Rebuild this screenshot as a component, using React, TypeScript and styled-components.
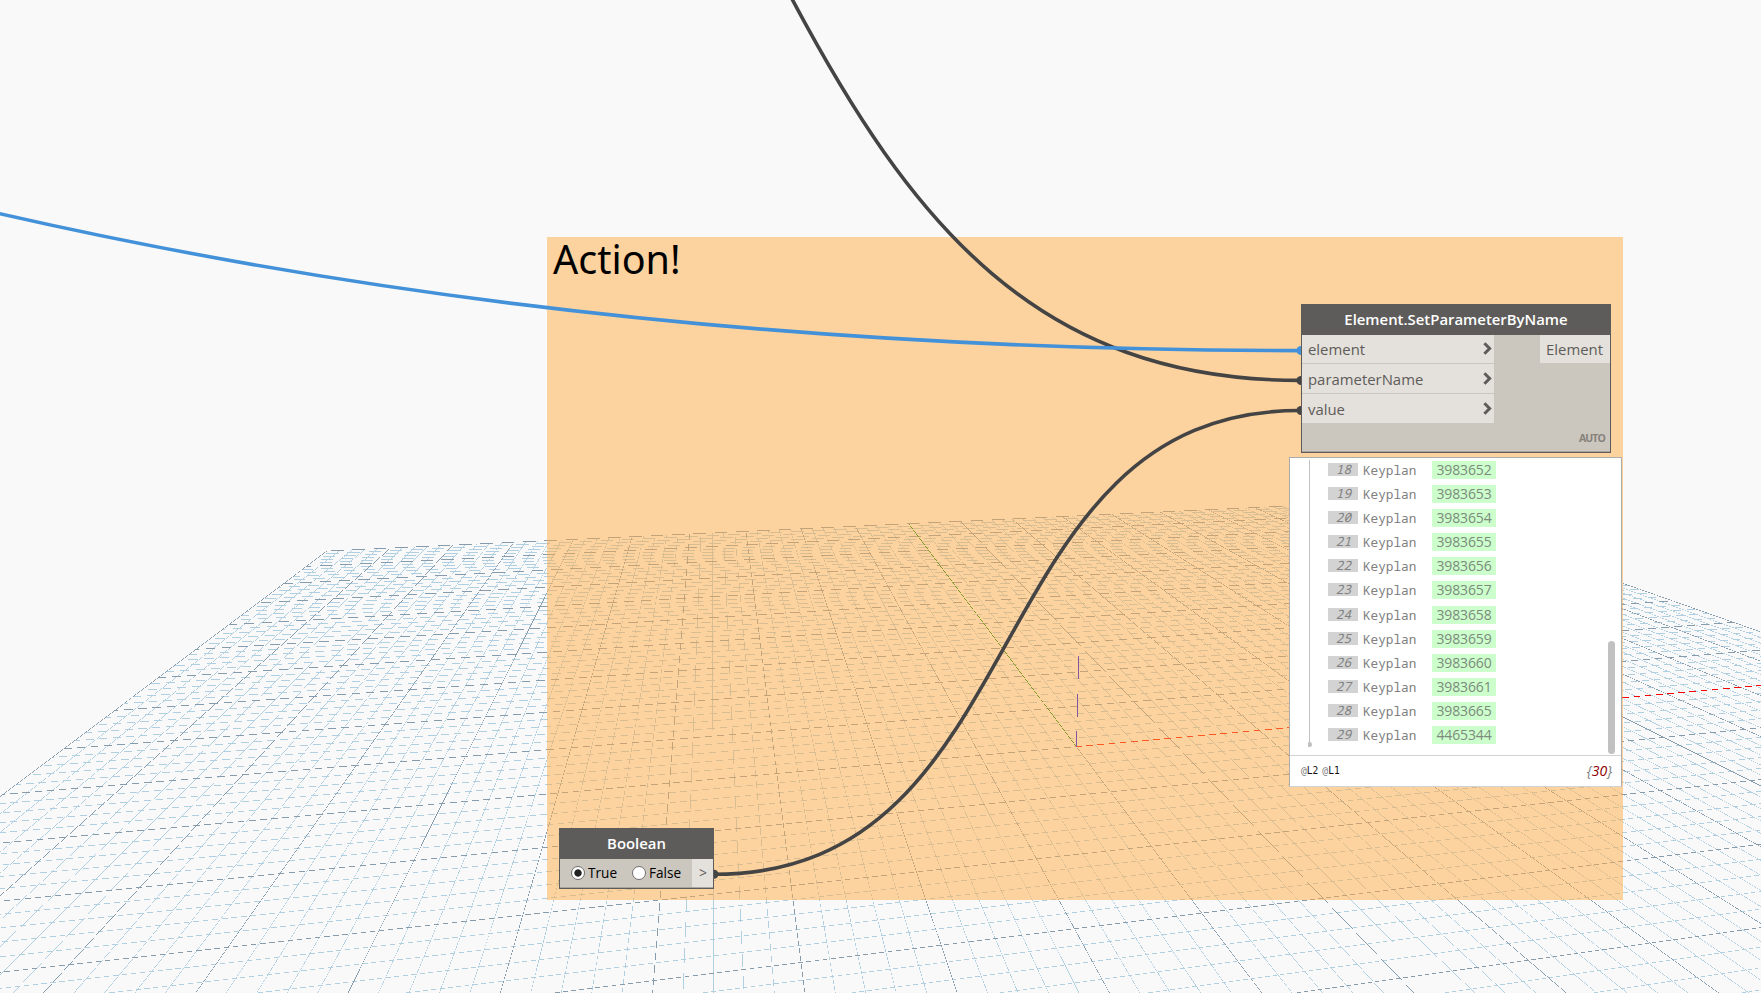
import React from "react";
import styled, { createGlobalStyle } from "styled-components";

const GlobalStyle = createGlobalStyle`
  * { box-sizing: border-box; }
  html, body { margin: 0; padding: 0; overflow: hidden; background: #f9f9f9; }
`;

const WIDTH = 1761;
const HEIGHT = 993;

const Workspace = styled.main`
  position: relative;
  width: ${WIDTH}px;
  height: ${HEIGHT}px;
  overflow: hidden;
  background: #f9f9f9;
  font-family: "Open Sans", "Noto Sans", sans-serif;
`;

const Layer = styled.svg`
  position: absolute;
  inset: 0;
  display: block;
`;

const Group = styled.section`
  position: absolute;
  left: 547px;
  top: 237px;
  width: 1076px;
  height: 663px;
  padding: 0 6px;
  background: rgba(255, 171, 69, 0.5);
`;

const GroupTitle = styled.h1`
  margin: 0;
  font-family: "Noto Sans", "Open Sans", sans-serif;
  font-size: 39.5px;
  font-weight: 400;
  line-height: 44px;
  color: #000;
`;

const NodeCard = styled.article<{ $x: number; $y: number; $w: number; $h: number }>`
  position: absolute;
  left: ${(p) => p.$x}px;
  top: ${(p) => p.$y}px;
  width: ${(p) => p.$w}px;
  height: ${(p) => p.$h}px;
  display: flex;
  flex-direction: column;
  border: 1px solid #5e5c5a;
  background: #cbc6be;
  box-shadow: inset 0 -1px 0 #aaa69f;
`;

const NodeHeader = styled.header`
  flex: none;
  height: 30px;
  line-height: 28px;
  text-align: center;
  background: #5e5c5a;
  color: #fff;
  font-size: 14.9px;
  font-weight: 600;
`;

const NodeBody = styled.div`
  display: flex;
  flex: 1;
  justify-content: space-between;
  align-items: flex-start;
`;

const Inputs = styled.div`
  display: flex;
  flex-direction: column;
  gap: 1px;
  width: 192px;
`;

const InputPort = styled.div<{ $h: number }>`
  display: flex;
  align-items: center;
  justify-content: space-between;
  height: ${(p) => p.$h}px;
  padding: 0 2px 0 6px;
  background: #e4e0db;
  color: #5e5c5a;
  font-size: 14.9px;
  line-height: 28px;
`;

const OutputPort = styled.div`
  width: 70px;
  height: 28px;
  padding-left: 6px;
  background: #e4e0db;
  color: #5e5c5a;
  font-size: 14.9px;
  line-height: 28px;
`;

const Lacing = styled.footer`
  padding: 0 5px 7px 0;
  text-align: right;
  color: #86817b;
  font-size: 10.5px;
  font-weight: 700;
  line-height: 14px;
  letter-spacing: -0.9px;
`;

const BooleanBody = styled.div`
  display: flex;
  height: 29px;
  align-items: stretch;
`;

const Choices = styled.div`
  display: flex;
  flex: 1;
  align-items: center;
  padding-left: 11px;
`;

const Choice = styled.label<{ $w: number }>`
  display: flex;
  align-items: center;
  gap: 3px;
  width: ${(p) => p.$w}px;
  margin-top: -2px;
  color: #000;
  font-size: 13.6px;
  line-height: 28px;
`;

const Radio = styled.span<{ $on?: boolean }>`
  width: 14px;
  height: 14px;
  border: 1px solid #707070;
  border-radius: 50%;
  background: ${(p) => (p.$on ? "radial-gradient(circle, #212121 0 3.3px, #fff 4px)" : "#fff")};
`;

const ValuePort = styled.div`
  width: 21px;
  height: 28px;
  padding-left: 7px;
  background: #e4e0db;
  color: #5e5c5a;
  font-size: 14px;
  line-height: 28px;
`;

const Preview = styled.aside`
  position: absolute;
  left: 1289px;
  top: 457px;
  width: 333px;
  height: 330px;
  display: flex;
  flex-direction: column;
  border: 1px solid #acacac;
  border-bottom-color: #d2d2d2;
  background: #fff;
`;

const PreviewList = styled.div`
  display: flex;
  height: 297px;
  padding: 0 6px 0 18px;
`;

const TreeLine = styled.svg`
  flex: none;
  width: 20px;
  height: 297px;
`;

const Rows = styled.ol`
  flex: 1;
  margin: 0;
  padding: 0;
  list-style: none;
`;

const Row = styled.li`
  display: flex;
  align-items: center;
  height: 24.09px;
`;

const Index = styled.span`
  width: 30px;
  height: 13px;
  margin: -1px 5px 0 0;
  padding-right: 7px;
  background: #d3d3d3;
  color: #808080;
  font: italic 12.7px / 13px "Noto Sans Mono", "DejaVu Sans Mono", monospace;
  text-align: right;
`;

const ItemName = styled.span`
  width: 69px;
  color: #808080;
  font: 12.7px / 18px "Noto Sans Mono", "DejaVu Sans Mono", monospace;
`;

const ElementId = styled.span`
  width: 64px;
  height: 18px;
  text-align: center;
  background: #ccffcc;
  color: #7d8a7d;
  font-size: 14px;
  line-height: 18px;
  letter-spacing: -0.15px;
`;

const ScrollThumb = styled.div`
  width: 7px;
  height: 113px;
  margin-top: 183px;
  border-radius: 4px;
  background: #c1c1c1;
`;

const PreviewFooter = styled.footer`
  display: flex;
  justify-content: space-between;
  align-items: center;
  flex: 1;
  padding: 0 9px 1px 11px;
  border-top: 1px solid #d2d2d2;
`;

const Levels = styled.div`
  display: flex;
  gap: 4px;
  color: #111;
  font: 9.6px / 12px "DejaVu Sans Mono", monospace;
  & i { font-style: normal; color: #808080; }
`;

const Count = styled.div`
  color: #808080;
  font-size: 14px;
  font-style: italic;
  line-height: 20px;
  & b { font-weight: 400; color: #8b0000; }
`;

/* Ground plane: a perspective projection of a 100 x 100 unit grid. */
const EXTENT = 50;
const ORIGIN = [1076.4, 746.7];
const VANISH_X = [6488.8, 262];
const VANISH_Y = [711.55, 262];
const STEP_X = 0.1748 / EXTENT;
const STEP_Y = 0.852 / EXTENT;
const NEAR = 0.55;

type Point = [number, number];

const depth = (x: number, y: number) => 1 + x * STEP_X + y * STEP_Y;

const project = (x: number, y: number): Point => {
  const w = depth(x, y);
  return [
    (ORIGIN[0] + x * STEP_X * VANISH_X[0] + y * STEP_Y * VANISH_Y[0]) / w,
    (ORIGIN[1] + x * STEP_X * VANISH_X[1] + y * STEP_Y * VANISH_Y[1]) / w,
  ];
};

const sliver = (a: Point, b: Point, width: number) => {
  const dx = b[0] - a[0];
  const dy = b[1] - a[1];
  const len = Math.hypot(dx, dy);
  const nx = (-dy / len) * (width / 2);
  const ny = (dx / len) * (width / 2);
  const p = (x: number, y: number) => `${x.toFixed(3)} ${y.toFixed(3)}`;
  return `M${p(a[0] + nx, a[1] + ny)}L${p(b[0] + nx, b[1] + ny)}L${p(b[0] - nx, b[1] - ny)}L${p(a[0] - nx, a[1] - ny)}Z`;
};

const LINE = 0.59;

const column = (x: number, from = -EXTENT) => {
  const start = Math.max(from, (NEAR - 1 - x * STEP_X) / STEP_Y);
  return sliver(project(x, start), project(x, EXTENT), LINE);
};

const row = (y: number, from = -EXTENT) => {
  const start = Math.max(from, (NEAR - 1 - y * STEP_Y) / STEP_X);
  return start < EXTENT ? sliver(project(start, y), project(EXTENT, y), LINE) : "";
};

const ticks = Array.from({ length: EXTENT * 2 + 1 }, (_, i) => i - EXTENT);
const minor = ticks.filter((t) => t % 5 !== 0);
const major = ticks.filter((t) => t % 5 === 0);

const Ground = () => (
  <Layer width={WIDTH} height={HEIGHT} shapeRendering="crispEdges">
    <g fill="#b0cfe0">
      {minor.map((t) => (
        <React.Fragment key={t}>
          <path d={row(t)} />
          <path d={column(t)} />
        </React.Fragment>
      ))}
    </g>
    <g fill="#869bac">
      {major.map((t) => (
        <React.Fragment key={t}>
          <path d={row(t)} />
          <path d={column(t)} />
        </React.Fragment>
      ))}
    </g>
    <path fill="#ff0000" d={row(0, 0)} />
    <path fill="#008000" d={column(0, 0)} />
    <path fill="#0000ff" d={sliver([1076.4, 746.7], [1078.97, 650], 0.61)} />
  </Layer>
);

const Wires = () => (
  <Layer width={WIDTH} height={HEIGHT} fill="none" strokeWidth="3.6">
    <path stroke="#444444" d="M791.5 -2C911 223 1037 380.4 1300 380.4" />
    <path stroke="#444444" d="M714 874.3C1041 874.3 973 410.5 1300 410.5" />
    <path stroke="#4291d9" d="M-1 213.5C432 312.3 867 350.6 1300 350.6" />
    <circle cx="1301" cy="350.5" r="4.5" fill="#4291d9" />
    <circle cx="1301" cy="380.5" r="4.5" fill="#444444" />
    <circle cx="1301" cy="410.5" r="4.5" fill="#444444" />
    <circle cx="714" cy="874.3" r="4.5" fill="#444444" />
  </Layer>
);

const Chevron = () => (
  <svg width="9" height="14" viewBox="0 0 9 14" fill="none">
    <path d="M1.4 1.3L6.6 6.5L1.4 11.7" stroke="#5e5c5a" strokeWidth="3" />
  </svg>
);

const inputs = [
  { label: "element", height: 28 },
  { label: "parameterName", height: 29 },
  { label: "value", height: 29 },
];

const items = [
  [18, "3983652"], [19, "3983653"], [20, "3983654"], [21, "3983655"],
  [22, "3983656"], [23, "3983657"], [24, "3983658"], [25, "3983659"],
  [26, "3983660"], [27, "3983661"], [28, "3983665"], [29, "4465344"],
];

export default function App() {
  return (
    <>
      <GlobalStyle />
      <Workspace>
        <Ground />
        <Group>
          <GroupTitle>Action!</GroupTitle>
        </Group>
        <Wires />
        <NodeCard $x={1301} $y={304} $w={310} $h={149}>
          <NodeHeader>Element.SetParameterByName</NodeHeader>
          <NodeBody>
            <Inputs>
              {inputs.map((p) => (
                <InputPort key={p.label} $h={p.height}>
                  {p.label}
                  <Chevron />
                </InputPort>
              ))}
            </Inputs>
            <OutputPort>Element</OutputPort>
          </NodeBody>
          <Lacing>AUTO</Lacing>
        </NodeCard>
        <Preview>
          <PreviewList>
            <TreeLine viewBox="0 0 20 297">
              <path d="M1.5 2V286" stroke="#c1c1c1" />
              <circle cx="1.5" cy="286.5" r="2.5" fill="#c1c1c1" />
            </TreeLine>
            <Rows>
              {items.map(([i, id]) => (
                <Row key={i}>
                  <Index>{i}</Index>
                  <ItemName>Keyplan</ItemName>
                  <ElementId>{id}</ElementId>
                </Row>
              ))}
            </Rows>
            <ScrollThumb />
          </PreviewList>
          <PreviewFooter>
            <Levels>
              <span><i>@</i>L2</span>
              <span><i>@</i>L1</span>
            </Levels>
            <Count>{"{"}<b>30</b>{"}"}</Count>
          </PreviewFooter>
        </Preview>
        <NodeCard $x={559} $y={828} $w={155} $h={61}>
          <NodeHeader>Boolean</NodeHeader>
          <BooleanBody>
            <Choices>
              <Choice $w={61}><Radio $on />True</Choice>
              <Choice $w={60}><Radio />False</Choice>
            </Choices>
            <ValuePort>&gt;</ValuePort>
          </BooleanBody>
        </NodeCard>
      </Workspace>
    </>
  );
}
